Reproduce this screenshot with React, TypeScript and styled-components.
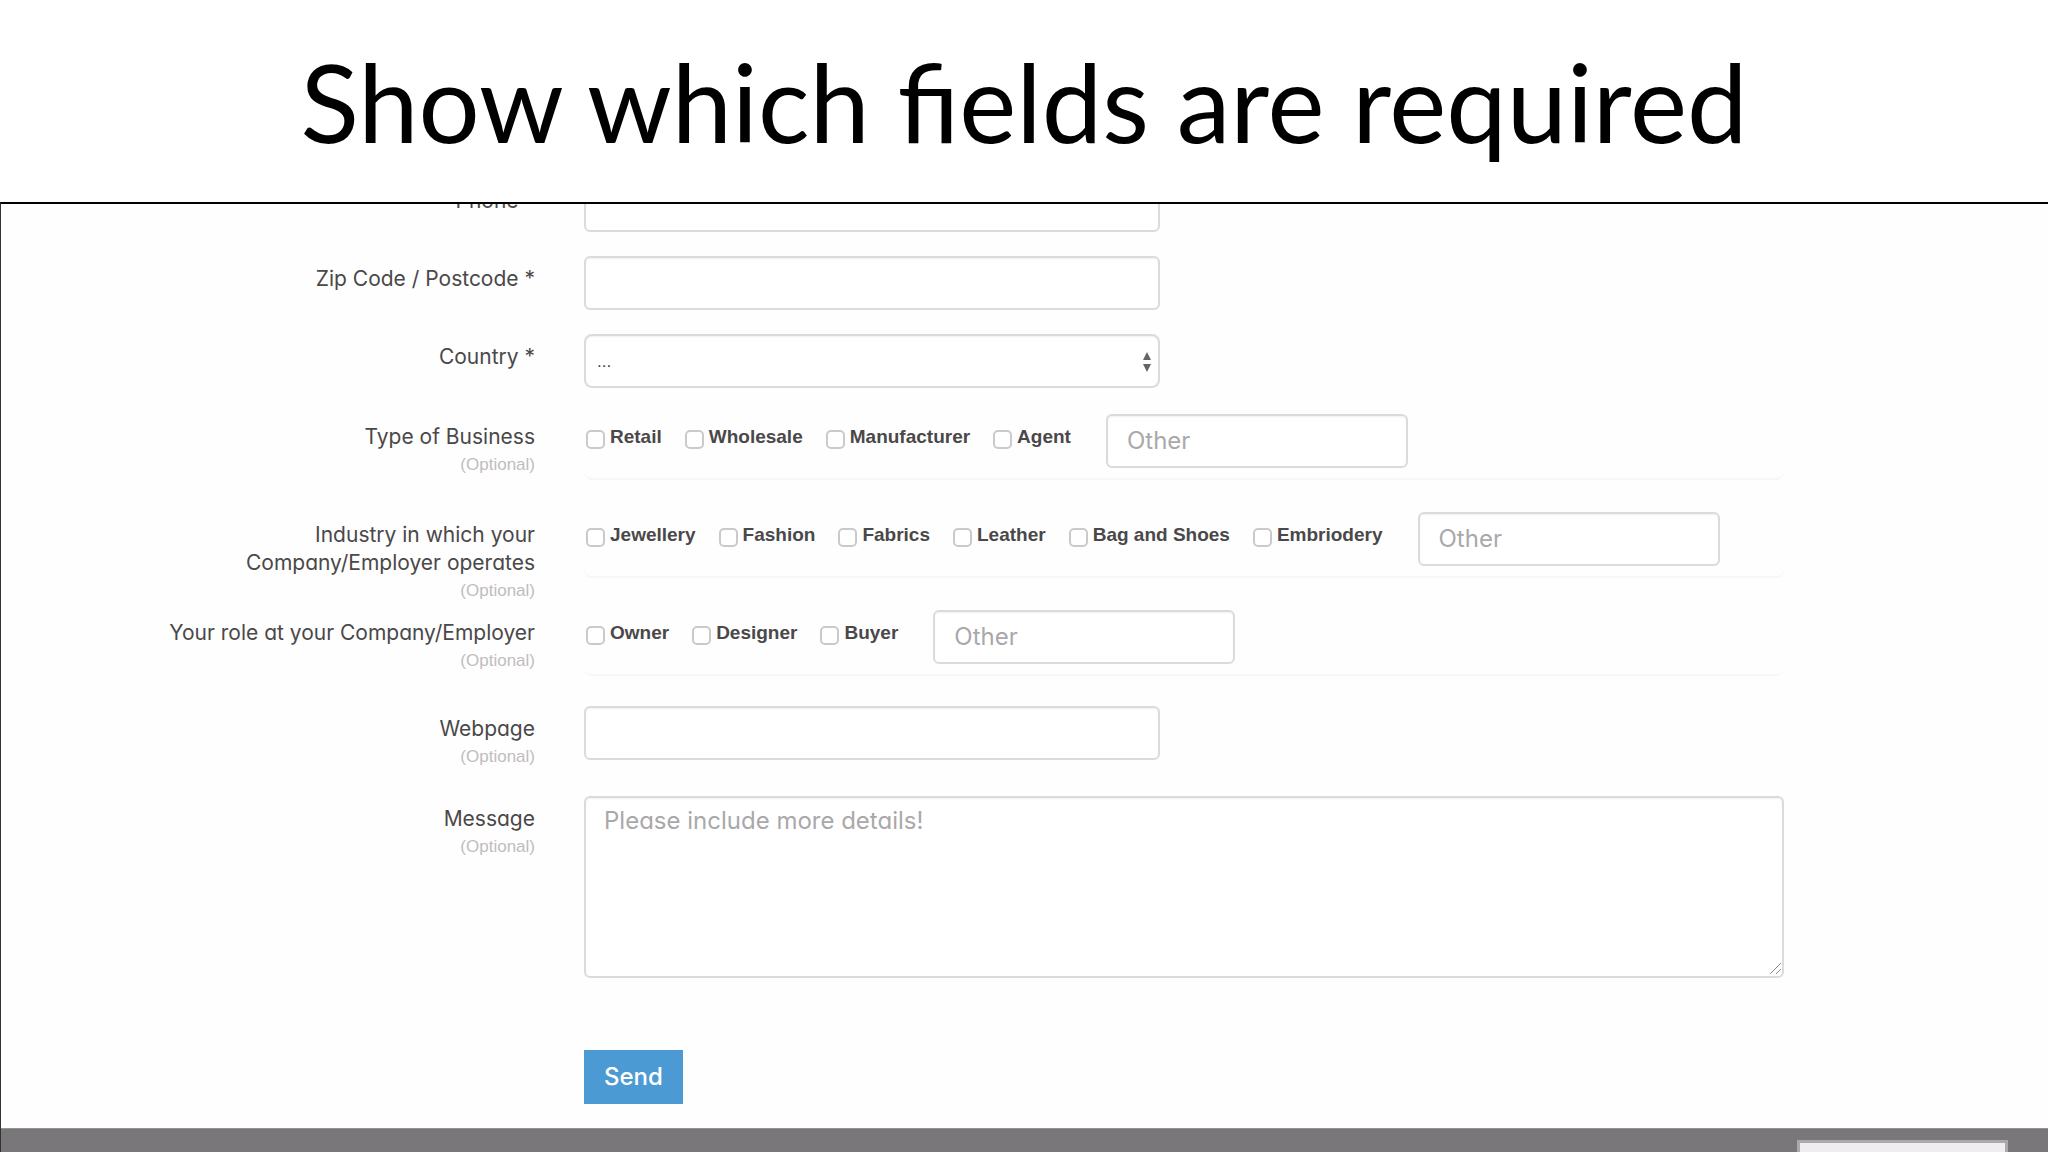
import React from "react";
import styled, { createGlobalStyle } from "styled-components";

const bodyFont = `Inter, "Noto Sans", sans-serif`;
const arial = `"Liberation Sans", Arial, sans-serif`;

const GlobalStyle = createGlobalStyle`
  *, *::before, *::after { box-sizing: border-box; }
  body { margin: 0; background: #ffffff; }
`;

const Slide = styled.div`
  display: flex;
  flex-direction: column;
  height: 100vh;
  overflow: hidden;
  font-family: ${bodyFont};
  font-feature-settings: "cv11";
  color: #4a4849;
`;

const Header = styled.header`
  flex: none;
  height: 202px;
  display: flex;
  justify-content: center;
  align-items: center;
`;

const Title = styled.h1`
  margin: 0;
  font-family: Lato, sans-serif;
  font-weight: 400;
  font-size: 108px;
  line-height: 132px;
  color: #000000;
  white-space: nowrap;
`;

const Panel = styled.main`
  flex: 1;
  overflow: hidden;
  border-top: 2px solid #000000;
  border-left: 1px solid #333333;
  background: #fefefe;
`;

const Form = styled.form`
  margin-top: -26px;
  padding-bottom: 24px;
`;

const Row = styled.div<{ $height: number; $top?: number }>`
  display: grid;
  grid-template-columns: 534fr 1200fr;
  column-gap: 49px;
  align-items: start;
  min-height: ${(p) => p.$height}px;
  padding-top: ${(p) => p.$top ?? 0}px;
  padding-right: 264px;
`;

const LabelCell = styled.div`
  padding-top: 9px;
  text-align: right;
`;

const LabelText = styled.label`
  display: block;
  font-size: 21px;
  line-height: 28px;
`;

const Optional = styled.span`
  display: block;
  font-family: ${arial};
  font-size: 17px;
  line-height: 28px;
  color: #bfbdbf;
`;

const TextInput = styled.input<{ $width: string }>`
  display: block;
  flex: none;
  width: ${(p) => p.$width};
  height: 54px;
  padding: 0 19px 2px;
  border: 2px solid #dcdadd;
  border-radius: 6px;
  background: #ffffff;
  box-shadow: inset 0 1px 2px rgba(0, 0, 0, 0.06);
  font: inherit;
  font-size: 24px;
  color: #555555;
  &::placeholder { color: #aaa8aa; opacity: 1; }
`;

const SelectWrap = styled.div`
  position: relative;
  width: 48%;
`;

const Select = styled.select`
  display: block;
  appearance: none;
  width: 100%;
  height: 54px;
  padding: 0 40px 0 11px;
  border: 2px solid #dcdadd;
  border-radius: 8px;
  background: #ffffff;
  box-shadow: inset 0 1px 2px rgba(0, 0, 0, 0.06);
  font-family: ${arial};
  font-size: 17px;
  color: #444444;
`;

const Arrows = styled.svg`
  position: absolute;
  right: 8px;
  top: 18px;
  width: 10px;
  height: 20px;
  fill: #666466;
  pointer-events: none;
`;

const Choices = styled.div`
  display: flex;
  align-items: flex-start;
  gap: 23px;
  height: 66px;
  padding-left: 2px;
  border-bottom: 2px solid #f7f5fa;
  border-radius: 0 0 8px 8px;
`;

const Choice = styled.label`
  display: flex;
  align-items: flex-start;
  gap: 5px;
  padding-top: 9px;
  font-family: ${arial};
  font-size: 19px;
  font-weight: 700;
  line-height: 28px;
  white-space: nowrap;
`;

const Tick = styled.input`
  appearance: none;
  width: 19px;
  height: 19px;
  margin: 7px 0 0;
  border: 2px solid #cbc9cc;
  border-radius: 5px;
  background: #ffffff;
  &:checked { background: #4c9ad4; }
`;

const OtherBox = styled.div`
  padding-left: 12px;
`;

const TextAreaWrap = styled.div`
  position: relative;
`;

const TextArea = styled.textarea`
  display: block;
  width: 100%;
  height: 182px;
  padding: 9px 18px;
  border: 2px solid #dcdadd;
  border-radius: 6px;
  background: #ffffff;
  box-shadow: inset 0 1px 2px rgba(0, 0, 0, 0.06);
  font: inherit;
  font-size: 24px;
  line-height: 28px;
  color: #555555;
  resize: none;
  &::placeholder { color: #aaa8aa; opacity: 1; }
`;

const Grip = styled.svg`
  position: absolute;
  right: 2px;
  bottom: 3px;
  width: 13px;
  height: 13px;
  fill: none;
  stroke: #8f8c8f;
  pointer-events: none;
`;

const Actions = styled(Row)`
  margin-top: 72px;
`;

const SendButton = styled.button`
  grid-column: 2;
  justify-self: start;
  height: 54px;
  padding: 0 20px 2px;
  border: 0;
  background: #4c9ad4;
  font: inherit;
  font-size: 24px;
  font-weight: 500;
  color: #ffffff;
`;

const Footer = styled.footer`
  display: flex;
  justify-content: flex-end;
  padding: 11px 40px 24px;
  border-top: 1px solid #969396;
  background: #7a777a;
`;

const FooterBox = styled.div`
  width: 211px;
  height: 54px;
  border: 3px solid #aca9ac;
  background: #efedf0;
`;

type FieldLabelProps = { id: string; lines: string[]; optional?: boolean };

function FieldLabel({ id, lines, optional }: FieldLabelProps) {
  return (
    <LabelCell>
      <LabelText htmlFor={id}>
        {lines.map((line, i) => (
          <React.Fragment key={line}>
            {i > 0 && <br />}
            {line}
          </React.Fragment>
        ))}
      </LabelText>
      {optional && <Optional>(Optional)</Optional>}
    </LabelCell>
  );
}

const groups = [
  { id: "business", label: ["Type of Business"], options: ["Retail", "Wholesale", "Manufacturer", "Agent"] },
  {
    id: "industry",
    label: ["Industry in which your", "Company/Employer operates"],
    options: ["Jewellery", "Fashion", "Fabrics", "Leather", "Bag and Shoes", "Embriodery"],
  },
  { id: "role", label: ["Your role at your Company/Employer"], options: ["Owner", "Designer", "Buyer"] },
];

export default function App() {
  return (
    <Slide>
      <GlobalStyle />
      <Header>
        <Title>Show which fields are required</Title>
      </Header>
      <Panel>
        <Form onSubmit={(e) => e.preventDefault()}>
          <Row $height={78}>
            <FieldLabel id="phone" lines={["Phone *"]} />
            <TextInput id="phone" type="tel" $width="48%" />
          </Row>
          <Row $height={78}>
            <FieldLabel id="zip" lines={["Zip Code / Postcode *"]} />
            <TextInput id="zip" type="text" $width="48%" />
          </Row>
          <Row $height={78}>
            <FieldLabel id="country" lines={["Country *"]} />
            <SelectWrap>
              <Select id="country" defaultValue="">
                <option value="">...</option>
              </Select>
              <Arrows viewBox="0 0 10 20" aria-hidden="true">
                <path d="M5 0 L9 8 H1 Z M1 12 H9 L5 20 Z" />
              </Arrows>
            </SelectWrap>
          </Row>
          {groups.map((group) => (
            <Row key={group.id} $height={98} $top={2}>
              <FieldLabel id={`${group.id}-other`} lines={group.label} optional />
              <Choices>
                {group.options.map((option) => (
                  <Choice key={option}>
                    <Tick type="checkbox" name={group.id} value={option} />
                    {option}
                  </Choice>
                ))}
                <OtherBox>
                  <TextInput id={`${group.id}-other`} type="text" placeholder="Other" $width="302px" />
                </OtherBox>
              </Choices>
            </Row>
          ))}
          <Row $height={90}>
            <FieldLabel id="webpage" lines={["Webpage"]} optional />
            <TextInput id="webpage" type="url" $width="48%" />
          </Row>
          <Row $height={182}>
            <FieldLabel id="message" lines={["Message"]} optional />
            <TextAreaWrap>
              <TextArea id="message" placeholder="Please include more details!" />
              <Grip viewBox="0 0 13 13" aria-hidden="true">
                <path d="M1 12 L12 1 M7 12 L12 7" />
              </Grip>
            </TextAreaWrap>
          </Row>
          <Actions $height={54}>
            <SendButton type="submit">Send</SendButton>
          </Actions>
        </Form>
        <Footer>
          <FooterBox />
        </Footer>
      </Panel>
    </Slide>
  );
}
